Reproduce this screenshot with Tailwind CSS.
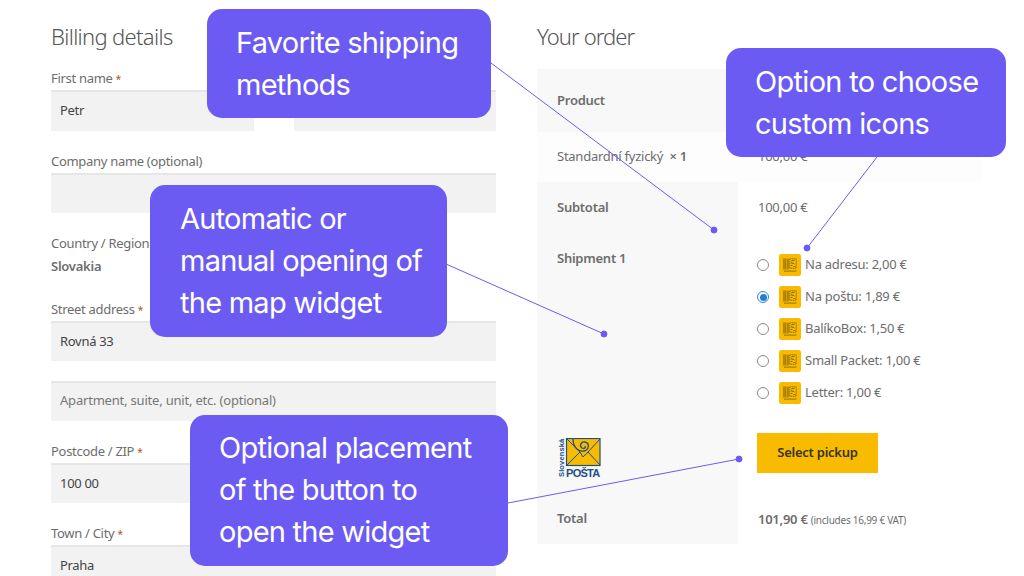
<!DOCTYPE html>
<html lang="en">
  <head>
    <meta charset="UTF-8" />
    <title>Checkout</title>
    <script src="https://cdn.jsdelivr.net/npm/@tailwindcss/browser@4"></script>
  </head>
  <body class="bg-white font-['Noto_Sans',sans-serif] text-[#6d6d6d]">
    <svg class="hidden">
      <symbol id="qr" viewBox="0 0 22 22">
        <rect width="22" height="22" rx="2.5" fill="#f9bb00" />
        <g fill="#6b5510">
          <rect x="4.5" y="4.5" width="1" height="11" />
          <rect x="6.5" y="4.5" width=".8" height="11" />
          <rect x="8.5" y="4.5" width="1" height="11" />
          <rect x="5" y="16.5" width="12.5" height="1.2" opacity=".6" />
        </g>
        <g fill="none" stroke="#6b5510" stroke-width=".8">
          <rect x="10.8" y="4.8" width="6.4" height="9.4" stroke-dasharray="1.4 .6" />
          <path d="M12.5 6.5h3M12 8l3.5 2M12 11.5h1.5M14.5 12.5h2M12.5 9.5h1" />
        </g>
      </symbol>
    </svg>
    <div class="relative w-[1024px] h-[576px] overflow-hidden">
      <div class="flex gap-[41px] pl-[51px] h-full">
        <!-- Billing -->
        <section class="w-[445px] shrink-0 pt-[21px]">
          <h2 class="text-[22px] leading-[30px] font-light text-[#555] tracking-[-0.67px]">Billing details</h2>
          <div class="mt-[18px] flex gap-[40px]">
            <div class="w-[203px]">
              <label class="block text-[13px] leading-[18px] tracking-[-0.3px] h-[21px]">First name <span class="text-[10px] text-[#b3541e]">*</span></label>
              <div class="h-[41px] bg-[#f2f2f2] border-t-2 border-[#e6e6e6] pl-[9px] text-[13px] leading-[37px] text-[#444] tracking-[-0.3px]">Petr</div>
            </div>
            <div class="flex-1 pt-[21px]">
              <div class="h-[41px] bg-[#f2f2f2] border-t-2 border-[#e6e6e6]"></div>
            </div>
          </div>
          <label class="block mt-[21px] text-[13px] leading-[18px] tracking-[-0.3px] h-[21px]">Company name (optional)</label>
          <div class="h-[40px] bg-[#f2f2f2] border-t-2 border-[#e6e6e6]"></div>
          <label class="block mt-[21px] text-[13px] leading-[18px] tracking-[-0.3px]">Country / Region</label>
          <div class="mt-[5px] text-[13px] leading-[18px] font-semibold tracking-[-0.25px]">Slovakia</div>
          <label class="block mt-[25px] text-[13px] leading-[18px] tracking-[-0.3px] h-[21px]">Street address <span class="text-[10px] text-[#b3541e]">*</span></label>
          <div class="h-[40px] bg-[#f2f2f2] border-t-2 border-[#e6e6e6] pl-[9px] text-[13px] leading-[36px] text-[#444] tracking-[-0.3px]">Rovná 33</div>
          <div class="mt-[20px] h-[40px] bg-[#f2f2f2] border-t-2 border-[#e6e6e6] pl-[9px] text-[13px] leading-[35px] text-[#777] tracking-[-0.2px]">Apartment, suite, unit, etc. (optional)</div>
          <label class="block mt-[21px] text-[13px] leading-[18px] tracking-[-0.3px] h-[21px]">Postcode / ZIP <span class="text-[10px] text-[#b3541e]">*</span></label>
          <div class="h-[40px] bg-[#f2f2f2] border-t-2 border-[#e6e6e6] pl-[9px] text-[13px] leading-[37px] text-[#444] tracking-[-0.3px]">100 00</div>
          <label class="block mt-[21px] text-[13px] leading-[18px] tracking-[-0.3px] h-[21px]">Town / City <span class="text-[10px] text-[#b3541e]">*</span></label>
          <div class="h-[40px] bg-[#f2f2f2] border-t-2 border-[#e6e6e6] pl-[9px] text-[13px] leading-[37px] text-[#444] tracking-[-0.3px]">Praha</div>
        </section>

        <!-- Order -->
        <section class="w-[445px] shrink-0 pt-[21px]">
          <h2 class="text-[22px] leading-[30px] font-light text-[#555] tracking-[-0.9px]">Your order</h2>
          <div class="mt-[18px] text-[13px] tracking-[-0.25px]">
            <div class="h-[63px] bg-[#f8f8f8] pl-5 flex items-center font-semibold">Product</div>
            <div class="h-[50px] bg-[#fdfdfd] pl-5 flex items-center">
              <span class="w-[201px]">Standardní fyzický <b class="font-semibold">&nbsp;× 1</b></span>
              <span>100,00 €</span>
            </div>
            <div class="flex h-[362px]">
              <div class="w-[201px] bg-[#f8f8f8] pl-5 flex flex-col font-semibold">
                <div class="mt-[16px] leading-[18px]">Subtotal</div>
                <div class="mt-[33px] leading-[18px]">Shipment 1</div>
                <svg class="mt-[171px]" width="45" height="40" viewBox="0 0 45 40">
                  <rect x="9.5" y="0.5" width="33.5" height="27" fill="#f9bb00" stroke="#1d4f86" stroke-width="1.2" />
                  <path d="M10 1 23 14 10 27M43 1 31 14 43 27M23 14 26 19 31 14" stroke="#1d4f86" stroke-width="1" fill="none" />
                  <path d="M16 1c0 9 6 13 11 12 5-1 6-8 1-9-4-1-6 4-3 6 2 1 4 0 3-2" fill="none" stroke="#1d4f86" stroke-width="1.3" />
                  <text x="9" y="39" font-family="Liberation Sans" font-weight="700" font-size="11" fill="#1d4f86" textLength="34">POŠTA</text>
                  <text transform="translate(6.5 39) rotate(-90)" font-family="Liberation Sans" font-weight="700" font-size="7.5" fill="#1d4f86" textLength="38">Slovenská</text>
                </svg>
                <div class="mt-[31px] leading-[18px]">Total</div>
              </div>
              <div class="pl-5 flex-1">
                <div class="mt-[16px] leading-[18px]">100,00 €</div>
                <div class="mt-[38px] -ml-px flex flex-col gap-[10px]">
                  <div class="flex items-center h-[22px]">
                    <span class="w-3 h-3 rounded-full border border-[#8a8a8a] bg-white"></span>
                    <svg class="ml-[10px] mr-[4px]" width="22" height="22"><use href="#qr" /></svg>
                    <span>Na adresu: 2,00 €</span>
                  </div>
                  <div class="flex items-center h-[22px]">
                    <span class="w-3 h-3 rounded-full border border-[#2f86dc] bg-white flex items-center justify-center"><span class="w-[7px] h-[7px] rounded-full bg-[#1e7fd8]"></span></span>
                    <svg class="ml-[10px] mr-[4px]" width="22" height="22"><use href="#qr" /></svg>
                    <span>Na poštu: 1,89 €</span>
                  </div>
                  <div class="flex items-center h-[22px]">
                    <span class="w-3 h-3 rounded-full border border-[#8a8a8a] bg-white"></span>
                    <svg class="ml-[10px] mr-[4px]" width="22" height="22"><use href="#qr" /></svg>
                    <span>BalíkoBox: 1,50 €</span>
                  </div>
                  <div class="flex items-center h-[22px]">
                    <span class="w-3 h-3 rounded-full border border-[#8a8a8a] bg-white"></span>
                    <svg class="ml-[10px] mr-[4px]" width="22" height="22"><use href="#qr" /></svg>
                    <span>Small Packet: 1,00 €</span>
                  </div>
                  <div class="flex items-center h-[22px]">
                    <span class="w-3 h-3 rounded-full border border-[#8a8a8a] bg-white"></span>
                    <svg class="ml-[10px] mr-[4px]" width="22" height="22"><use href="#qr" /></svg>
                    <span>Letter: 1,00 €</span>
                  </div>
                </div>
                <div class="mt-[29px] -ml-px w-[121px] h-[40px] bg-[#f9bb00] text-[#3b3320] font-semibold flex items-center justify-center">Select pickup</div>
                <div class="mt-[37px] leading-[18px]"><b class="font-semibold">101,90 €</b> <span class="text-[10px] tracking-[-0.25px]">(includes 16,99 € VAT)</span></div>
              </div>
            </div>
          </div>
        </section>
      </div>

      <!-- Callout connectors -->
      <svg class="absolute inset-0" width="1024" height="576" viewBox="0 0 1024 576" fill="#6c5bf3" stroke="#6c5bf3">
        <line x1="491" y1="63" x2="714" y2="230" />
        <line x1="877" y1="157" x2="807" y2="248" />
        <line x1="446" y1="264" x2="604" y2="334" />
        <line x1="508" y1="503" x2="739" y2="459" />
        <circle cx="714" cy="230" r="3" />
        <circle cx="807" cy="248" r="3" />
        <circle cx="604" cy="334" r="3" />
        <circle cx="739" cy="459" r="3" />
      </svg>

      <!-- Callouts -->
      <div class="absolute left-[207px] top-[9px] w-[284px] h-[109px] rounded-[15px] bg-[#6c5bf3] text-white font-['Inter',sans-serif] font-normal text-[29px] leading-[42px] pl-[29px] pt-[13px] tracking-[-0.75px]">Favorite shipping<br />methods</div>
      <div class="absolute left-[150px] top-[185px] w-[297px] h-[152px] rounded-[15px] bg-[#6c5bf3] text-white font-['Inter',sans-serif] font-normal text-[29px] leading-[42px] pl-[30px] pt-[13px] tracking-[-0.75px]">Automatic or<br />manual opening of<br />the map widget</div>
      <div class="absolute left-[190px] top-[415px] w-[318px] h-[151px] rounded-[15px] bg-[#6c5bf3] text-white font-['Inter',sans-serif] font-normal text-[29px] leading-[42px] pl-[29px] pt-[12px] tracking-[-0.75px]">Optional placement<br />of the button to<br />open the widget</div>
      <div class="absolute left-[726px] top-[48px] w-[280px] h-[109px] rounded-[15px] bg-[#6c5bf3] text-white font-['Inter',sans-serif] font-normal text-[29px] leading-[42px] pl-[29px] pt-[13px] tracking-[-0.7px]">Option to choose<br />custom icons</div>
    </div>
  </body>
</html>
